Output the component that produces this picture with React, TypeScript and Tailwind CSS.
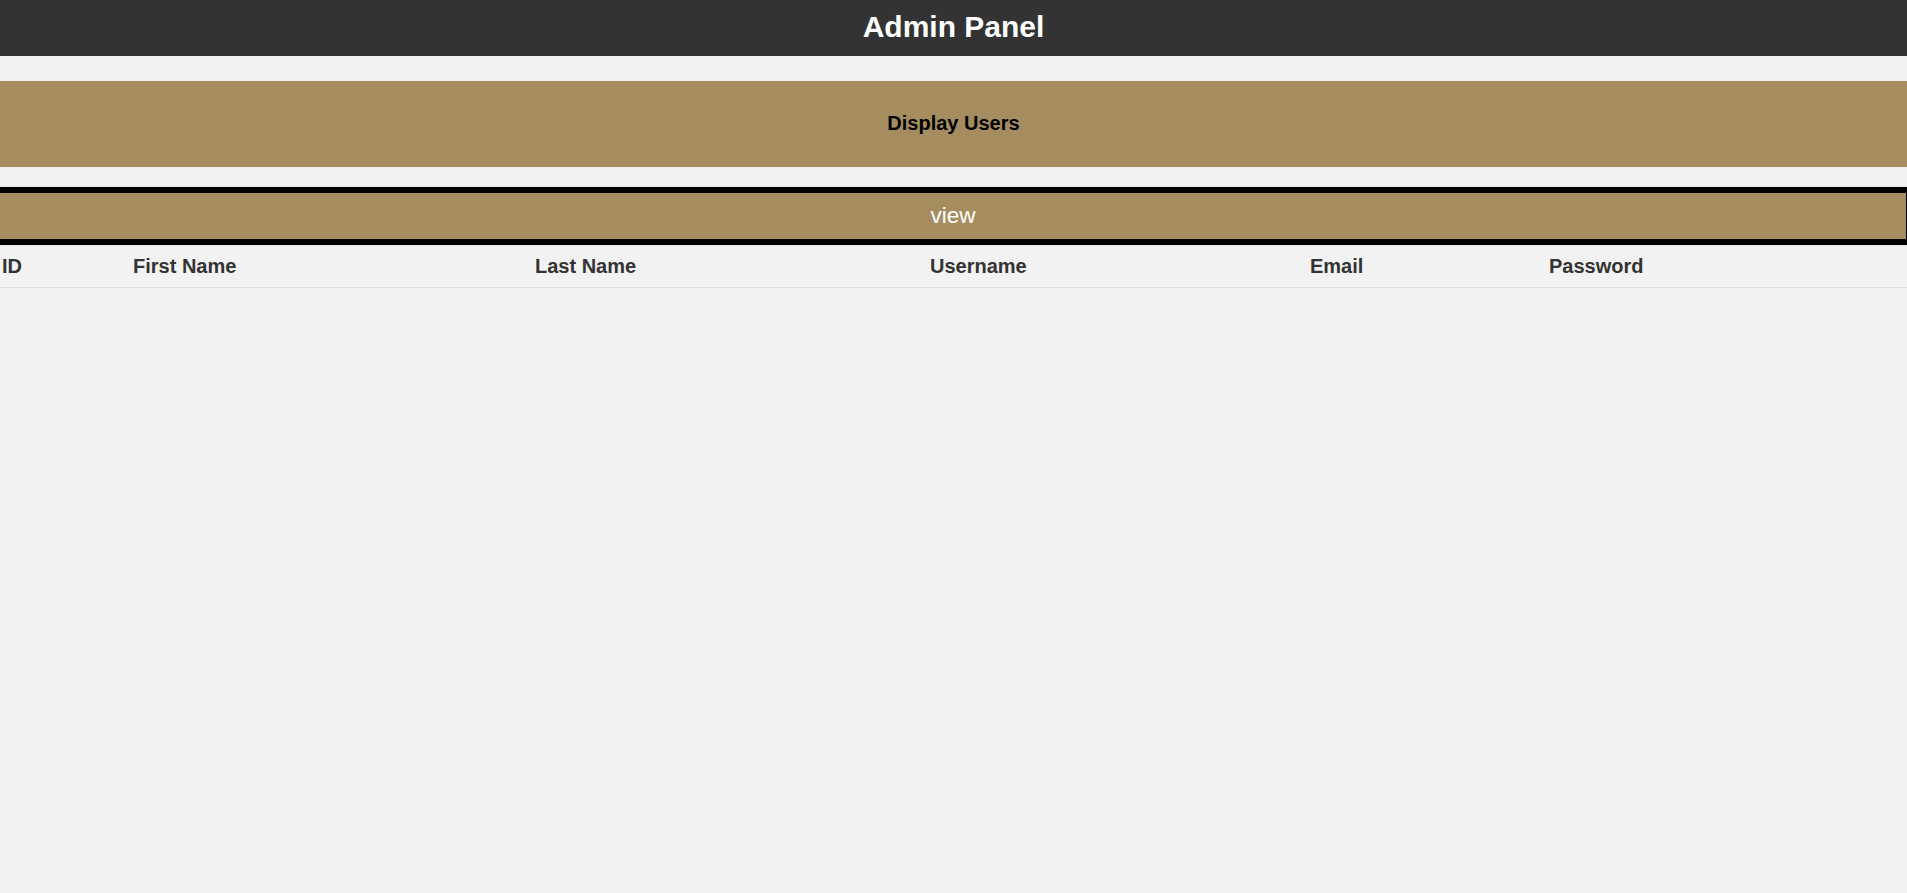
// App.tsx - admin panel, user list

const columns = [
  { label: "ID", width: "w-[131px]" },
  { label: "First Name", width: "w-[402px]" },
  { label: "Last Name", width: "w-[395px]" },
  { label: "Username", width: "w-[380px]" },
  { label: "Email", width: "w-[239px]" },
  { label: "Password", width: "flex-1" },
];

export default function App() {
  return (
    <div className="min-h-screen bg-[#f2f2f2] font-['Liberation_Sans',Arial,sans-serif]">
      {/* Top bar */}
      <header className="h-[56px] bg-[#333333] flex items-center justify-center pb-1">
        <h1 className="text-[30px] font-bold text-white leading-normal">Admin Panel</h1>
      </header>

      {/* Section title */}
      <div className="mt-[25px] h-[86px] bg-[#a68d60] flex items-center justify-center pb-[3px]">
        <h2 className="text-[20px] font-bold text-black">Display Users</h2>
      </div>

      {/* View button */}
      <button className="mt-[20px] w-full h-[58px] bg-[#a68d60] border-y-[6px] border-r border-black text-white text-[22.5px] flex items-center justify-center">
        view
      </button>

      {/* Table header */}
      <div className="flex h-[43px] items-center border-b border-[#dddddd] text-[20px] font-bold text-[#333333]">
        {columns.map((col) => (
          <div key={col.label} className={`${col.width} pl-[2px]`}>
            {col.label}
          </div>
        ))}
      </div>
    </div>
  );
}
